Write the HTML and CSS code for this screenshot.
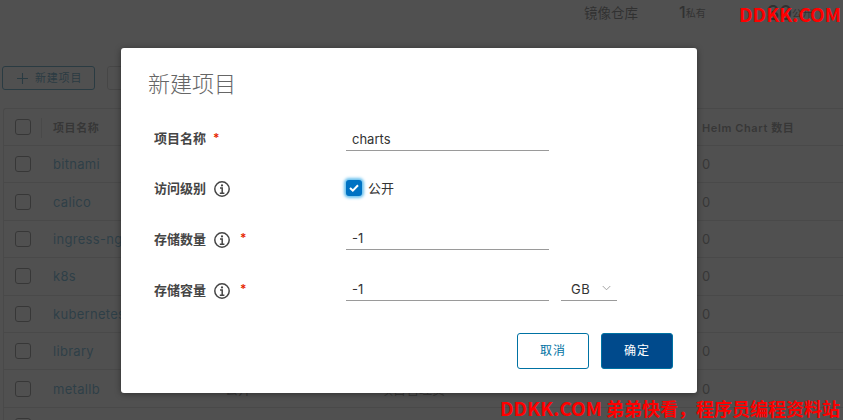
FILE: index.html
```html
<!DOCTYPE html>
<html lang="zh">
<head>
<meta charset="utf-8">
<title>新建项目</title>
<link rel="stylesheet" href="styles.css">
</head>
<body>
<div class="page">
  <div class="stats">
    <span class="stats-title">镜像仓库</span>
    <span class="stat-num">1</span><span class="stat-label">私有</span>
    <span class="stat-num stat-num-wide">30</span><span class="stat-label">公开</span>
  </div>
  <div class="actions">
    <button class="new-btn"><svg class="plus" viewBox="0 0 12 12"><path d="M6 0v12M0 6h12"/></svg>新建项目</button>
    <button class="ghost-btn"></button>
  </div>
  <div class="table">
    <div class="row head"><span class="c-check"><i class="box"></i></span><span class="c-name">项目名称</span><span class="c-a"></span><span class="c-b"></span><span class="c-helm">Helm Chart 数目</span></div>
    <div class="row"><span class="c-check"><i class="box"></i></span><span class="c-name link">bitnami</span><span class="c-a"></span><span class="c-b"></span><span class="c-helm">0</span></div>
    <div class="row"><span class="c-check"><i class="box"></i></span><span class="c-name link">calico</span><span class="c-a"></span><span class="c-b"></span><span class="c-helm">0</span></div>
    <div class="row"><span class="c-check"><i class="box"></i></span><span class="c-name link">ingress-nginx</span><span class="c-a"></span><span class="c-b"></span><span class="c-helm">0</span></div>
    <div class="row"><span class="c-check"><i class="box"></i></span><span class="c-name link">k8s</span><span class="c-a"></span><span class="c-b"></span><span class="c-helm">0</span></div>
    <div class="row"><span class="c-check"><i class="box"></i></span><span class="c-name link">kubernetes</span><span class="c-a"></span><span class="c-b"></span><span class="c-helm">0</span></div>
    <div class="row"><span class="c-check"><i class="box"></i></span><span class="c-name link">library</span><span class="c-a"></span><span class="c-b"></span><span class="c-helm">0</span></div>
    <div class="row"><span class="c-check"><i class="box"></i></span><span class="c-name link">metallb</span><span class="c-a">公开</span><span class="c-b">项目管理员</span><span class="c-helm">0</span></div>
    <div class="row"><span class="c-check"><i class="box"></i></span><span class="c-name link"></span><span class="c-a"></span><span class="c-b"></span><span class="c-helm"></span></div>
  </div>
</div>
<div class="backdrop"></div>
<div class="modal">
  <h1 class="modal-title">新建项目</h1>
  <form class="form">
    <div class="field field-first">
      <div class="label">项目名称<span class="req req-first">*</span></div>
      <div class="control"><div class="input">charts</div></div>
    </div>
    <div class="field">
      <div class="label">访问级别<svg class="info" viewBox="0 0 16 16"><circle cx="8" cy="8" r="7.2"/><circle class="dot" cx="8" cy="4.4" r="1.1"/><path d="M6 7h2.2v5M5.8 12.2h4.6"/></svg></div>
      <div class="control"><span class="check"><svg viewBox="0 0 10 8"><path d="M1 4l2.8 2.6L9 1.2"/></svg></span><span class="check-text">公开</span></div>
    </div>
    <div class="field">
      <div class="label">存储数量<svg class="info" viewBox="0 0 16 16"><circle cx="8" cy="8" r="7.2"/><circle class="dot" cx="8" cy="4.4" r="1.1"/><path d="M6 7h2.2v5M5.8 12.2h4.6"/></svg><span class="req">*</span></div>
      <div class="control"><div class="input">-1</div></div>
    </div>
    <div class="field">
      <div class="label">存储容量<svg class="info" viewBox="0 0 16 16"><circle cx="8" cy="8" r="7.2"/><circle class="dot" cx="8" cy="4.4" r="1.1"/><path d="M6 7h2.2v5M5.8 12.2h4.6"/></svg><span class="req">*</span></div>
      <div class="control"><div class="input">-1</div><div class="select">GB<svg class="chev" viewBox="0 0 10 6"><path d="M.8.8L5 5l4.2-4.2"/></svg></div></div>
    </div>
  </form>
  <div class="footer">
    <button class="btn btn-outline" type="button">取消</button>
    <button class="btn btn-primary" type="button">确定</button>
  </div>
</div>
<div class="mark mark-top">DDKK.COM</div>
<div class="mark mark-bottom"><span class="mark-latin">DDKK.COM</span> 弟弟快看，程序员编程资料站</div>
</body>
</html>
```
FILE: styles.css
```css
* { box-sizing: border-box; }
html, body { margin: 0; height: 100%; overflow: hidden; }
body {
  position: relative;
  width: 843px;
  height: 420px;
  background: #fff;
  font-family: Inter, "Noto Sans CJK SC", sans-serif;
  color: #333;
}
.page { height: 420px; overflow: hidden; padding: 0 0 0 3px; }
.stats { height: 66px; display: flex; align-items: flex-start; padding: 2px 0 0 581px; }
.stats-title { font-size: 13.5px; line-height: 22px; color: #333; width: 95px; }
.stat-num { font-size: 16px; line-height: 20px; font-weight: 500; color: #333; }
.stat-num-wide { font-size: 20px; margin-left: 81px; line-height: 22px; }
.stat-label { font-size: 10px; line-height: 22px; color: #333; width: 0; white-space: nowrap; }
.actions { height: 42px; display: flex; align-items: flex-start; gap: 12px; margin-left: -1px; }
.new-btn {
  width: 93px; height: 24px; background: #fff; border: 1px solid #0072a3; border-radius: 3px;
  padding: 0 0 0 14px; display: flex; align-items: center; gap: 7px;
  font: 11px/1 Inter, "Noto Sans CJK SC", sans-serif; letter-spacing: .8px; color: #0072a3;
}
.plus { width: 11px; height: 11px; fill: none; stroke: #0072a3; stroke-width: 1.2; }
.ghost-btn { width: 40px; height: 24px; background: #fff; border: 1px solid #bbb; border-radius: 3px; }
.table { border: 1px solid #ccc; border-right: 0; border-radius: 3px 0 0 0; height: 330px; }
.row { height: 37.4px; display: flex; align-items: center; border-bottom: 1px solid #ccc; font-size: 13px; color: #565656; }
.head { font-size: 11px; font-weight: 600; letter-spacing: .6px; color: #565656; height: 37px; }
.c-check { width: 37px; height: 100%; padding-left: 11px; display: flex; align-items: center; flex: none; }
.head .c-check { position: relative; }
.head .c-check::after { content: ""; position: absolute; left: 37px; top: 9px; bottom: 7px; width: 1px; background: #ccc; }
.box { display: block; width: 16px; height: 16px; border: 1px solid #565656; border-radius: 3px; background: #fff; }
.c-name { width: 184px; padding-left: 12px; flex: none; white-space: nowrap; }
.link { color: #1a8ec4; letter-spacing: .3px; }
.c-a { width: 155px; flex: none; }
.c-b { width: 322px; flex: none; }
.c-helm { flex: none; white-space: nowrap; }
.backdrop { position: absolute; inset: 0; background: rgba(49, 49, 49, .85); }
.modal {
  position: absolute; left: 121px; top: 48px; width: 576px; height: 345px;
  background: #fff; border-radius: 3px; box-shadow: 0 1px 6px rgba(0, 0, 0, .4);
  padding: 0 24px 0 27px; display: flex; flex-direction: column;
}
.modal-title { margin: 0; height: 68px; padding-top: 20px; font-size: 22px; line-height: 32px; font-weight: 200; color: #666; }
.form { padding-left: 6px; display: flex; flex-direction: column; }
.field { height: 50.6px; display: flex; align-items: center; }
.field-first { height: 46.6px; }
.field-first .label { margin-bottom: 4px; }
.label { width: 192px; flex: none; display: flex; align-items: center; font-size: 13px; font-weight: 600; color: #454545; height: 24px; }
.info { width: 16px; height: 16px; margin: 3px 0 0 8px; fill: none; stroke: #454545; stroke-width: 1.5; flex: none; }
.info .dot { fill: #454545; stroke: none; }
.req { color: #e62700; font-size: 12px; font-weight: 600; margin: 0 0 2px 10px; }
.req-first { margin: 0 0 0 7px; }
.control { display: flex; align-items: center; height: 24px; }
.input {
  width: 203px; height: 24px; border-bottom: 1px solid #9a9a9a; padding: 0 6px;
  font-size: 13px; line-height: 24px; color: #333;
}
.select {
  width: 56px; height: 24px; margin-left: 12px; border-bottom: 1px solid #9a9a9a; padding-left: 10px;
  display: flex; align-items: center; gap: 12px; font-size: 13px; letter-spacing: .5px; color: #333;
}
.chev { width: 9px; height: 6px; fill: none; stroke: #999; stroke-width: 1; margin-bottom: 1px; }
.check {
  width: 16px; height: 16px; background: #0072c3; border-radius: 3px; display: flex; align-items: center; justify-content: center;
  box-shadow: 0 0 3px 2px #6bc1ee;
}
.check svg { width: 10px; height: 8px; fill: none; stroke: #fff; stroke-width: 2; }
.check-text { font-size: 13px; color: #333; margin-left: 6px; }
.footer { display: flex; justify-content: flex-end; gap: 12px; margin-top: 19px; }
.btn { width: 72px; height: 36px; border-radius: 3px; font: 12px/1 Inter, "Noto Sans CJK SC", sans-serif; letter-spacing: 1px; padding: 0; }
.btn-outline { background: #fff; border: 1px solid #0072a3; color: #0072a3; }
.btn-primary { background: #004a8c; border: 1px solid #0072a3; color: #fff; }
.mark { position: absolute; color: #f00; font-weight: 700; font-family: "Noto Sans CJK SC", sans-serif; white-space: nowrap; }
.mark-top { left: 739px; top: 1px; font-size: 19px; line-height: 26px; }
.mark-bottom { left: 500px; top: 397px; font-size: 18px; line-height: 22px; }
.mark-latin { font-size: 19px; }
```
